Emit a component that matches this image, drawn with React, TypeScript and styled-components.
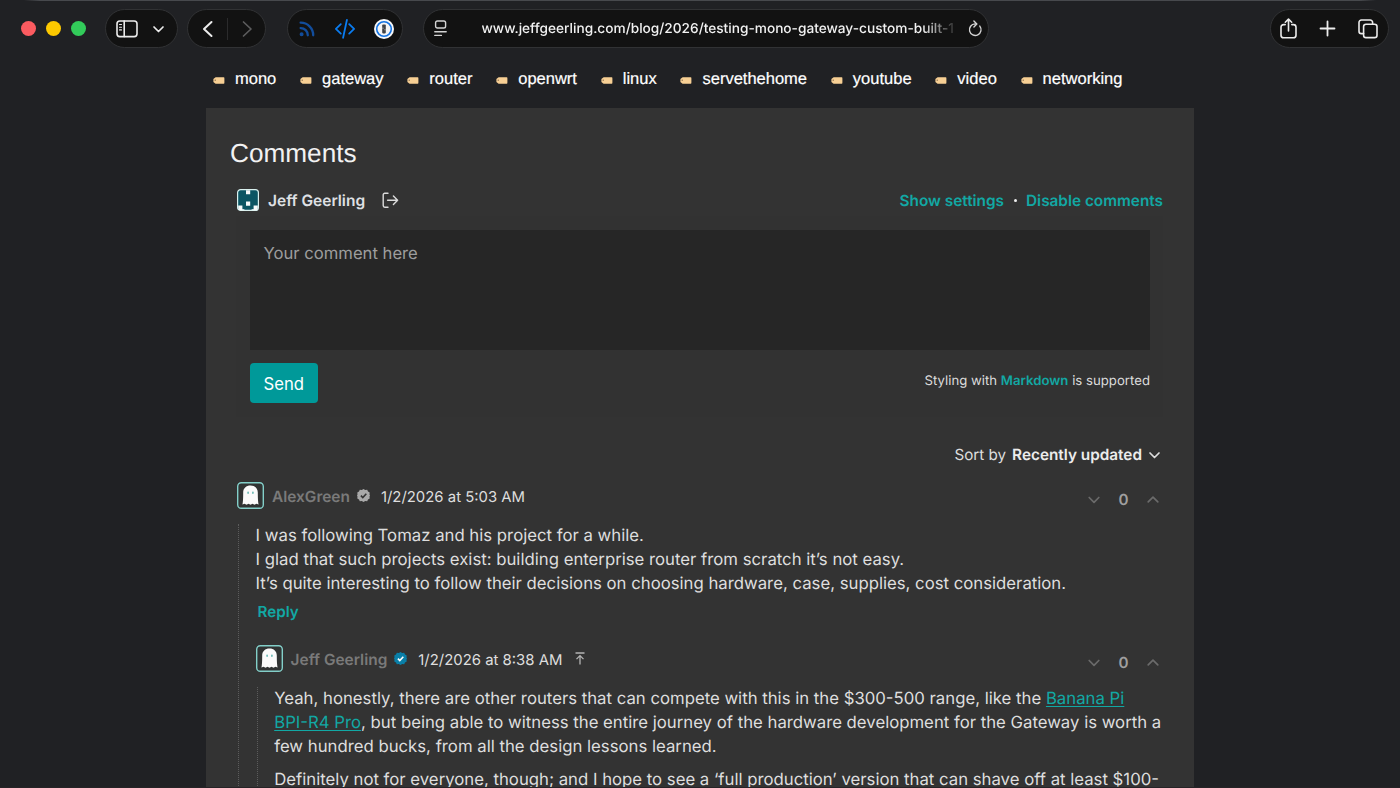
import React from 'react';
import styled, { createGlobalStyle } from 'styled-components';

const sans = `Inter, "Liberation Sans", sans-serif`;
const helv = `"Liberation Sans", Arial, sans-serif`;
const teal = '#12a8a4';

const GlobalStyle = createGlobalStyle`
  *, *::before, *::after { box-sizing: border-box; }
  body {
    margin: 0;
    background: #202124;
    color: #dedede;
    font-family: ${sans};
    text-rendering: geometricPrecision;
    -webkit-font-smoothing: antialiased;
  }
  svg { display: block; flex: none; overflow: visible; }
`;

const Window = styled.div`
  width: 1400px;
  height: 788px;
  overflow: hidden;
  border-bottom: 1px solid #262326;
  background: #202124;
`;

/* Browser toolbar */

const Toolbar = styled.header`
  position: relative;
  display: flex;
  align-items: center;
  height: 56px;
  padding: 1px 11px 0 21px;

  &::before {
    content: '';
    position: absolute;
    top: 0;
    left: 24px;
    right: 24px;
    height: 1px;
    background: linear-gradient(90deg, transparent, #47494d 16px, #47494d calc(100% - 16px), transparent);
  }
`;

const Lights = styled.div`
  display: flex;
  gap: 10px;
  margin-right: 19px;
`;

const Light = styled.span<{ $color: string }>`
  width: 15px;
  height: 15px;
  border-radius: 50%;
  background: ${(p) => p.$color};
`;

const Pill = styled.div<{ $width: number; $after?: number; $color?: string; $pad: string }>`
  display: flex;
  align-items: center;
  justify-content: space-between;
  width: ${(p) => p.$width}px;
  height: 39px;
  margin-right: ${(p) => p.$after ?? 0}px;
  padding: ${(p) => p.$pad};
  border: 1px solid #313234;
  border-radius: 20px;
  background: #121212;
  color: ${(p) => p.$color ?? '#ececec'};
`;

const PillDivider = styled.span`
  width: 1px;
  height: 22px;
  background: #2b2b2c;
`;

const Url = styled.span`
  flex: 1;
  margin: 1px 8px 0 35px;
  white-space: nowrap;
  font-size: 13.68px;
  font-weight: 500;
  line-height: 20px;
  color: #f2f2f2;
  mask-image: linear-gradient(90deg, #000 440px, transparent 477px);
`;

const Spacer = styled.div`
  flex: 1;
`;

/* Page */

const TagList = styled.nav`
  display: flex;
  align-items: center;
  gap: 23.8px;
  height: 45px;
  margin: 0 0 7px 213px;
`;

const Tag = styled.a`
  display: flex;
  align-items: center;
  gap: 10px;
  font: 16.5px/20px ${helv};
  color: #fff;
  -webkit-text-stroke: 0.2px #fff;

  svg { margin-top: 4px; }
`;

const Card = styled.main`
  width: 988px;
  height: 700px;
  margin: 0 auto;
  padding: 29px 31px 0;
  background: #333;
`;

const Title = styled.h2`
  margin: 0 0 18px -7px;
  font: 400 26.2px/32px ${helv};
  color: #f2f2f2;
`;

const AccountBar = styled.div`
  display: flex;
  align-items: center;
  height: 26px;
  font-size: 15.35px;
  font-weight: 600;
`;

const AccountName = styled.span`
  margin: 1px 17px 0 9px;
  font-size: 15.5px;
  color: #dfe0e4;
`;

const AccountLinks = styled.span`
  display: flex;
  align-items: center;
  margin: 1px 0 0 auto;
  color: #fff;
`;

const TealLink = styled.a`
  font-weight: 600;
  color: ${teal};
`;

const Dot = styled.i`
  width: 3px;
  height: 3px;
  margin: 0 9.5px;
  border-radius: 50%;
  background: #f0f0f0;
`;

const Form = styled.form`
  width: 927px;
  margin: 3px 0 0 -1px;
  padding: 14px 13px 14px 14px;
  background: #323232;
`;

const CommentInput = styled.div`
  height: 120px;
  padding: 12px 13.5px;
  background: #262626;
  font-size: 16.65px;
  line-height: 24px;
  color: #9d9d9d;
`;

const FormActions = styled.div`
  display: flex;
  justify-content: space-between;
  margin-top: 13px;
`;

const SendButton = styled.button`
  width: 67.5px;
  height: 40px;
  padding: 1px 0 0;
  border: 0;
  border-radius: 4px;
  background: #009999;
  color: #fff;
  font: 400 16.7px/24px ${sans};
`;

const MarkdownHint = styled.span`
  height: 36px;
  font-size: 13.17px;
  line-height: 36px;
  letter-spacing: 0.02px;
  color: #dcdcdc;
`;

const SortBar = styled.div`
  display: flex;
  align-items: center;
  justify-content: flex-end;
  height: 24px;
  margin: 26px 3px 15px 0;
  font-size: 15.2px;
  line-height: 24px;

  b {
    margin: 0 7px 0 6px;
    font-size: 15.34px;
    font-weight: 600;
    color: #ececec;
  }
`;

const CommentHeader = styled.div`
  display: flex;
  align-items: center;
  height: 27px;
  font-size: 14.9px;
  line-height: 20px;
`;

const Author = styled.span`
  margin: 2px 7px 0 8px;
  font-size: 15.45px;
  font-weight: 600;
  color: #7a7a7a;
`;

const Timestamp = styled.time`
  margin: 2px 13px 0 11px;
`;

const Votes = styled.div`
  display: flex;
  align-items: center;
  gap: 18.5px;
  margin: 9px 4px 0 auto;
  font-size: 15.2px;
  font-weight: 600;
  color: #a0a0a0;
`;

const Thread = styled.div<{ $inset: number }>`
  margin: 15px 0 0 ${(p) => p.$inset}px;
  padding-left: 16.6px;
  border-left: 1px dotted #5c5c5c;
  font-size: 16.74px;
  line-height: 24px;
`;

const Paragraph = styled.p`
  margin: 0 0 9px;
  white-space: nowrap;

  a {
    color: ${teal};
    text-decoration: underline;
    text-decoration-thickness: 1px;
    text-underline-offset: 2px;
  }
`;

const ReplyLink = styled(TealLink)`
  display: block;
  margin: -5px 0 21px 2px;
  font-size: 15.2px;
  line-height: 24px;
`;

/* Icons */

const line = {
  fill: 'none',
  stroke: 'currentColor',
  strokeLinecap: 'round' as const,
  strokeLinejoin: 'round' as const,
};

const Chevron = ({ d, w, h, color, sw = 1.7 }: { d: string; w: number; h: number; color?: string; sw?: number }) => (
  <svg width={w} height={h} {...line} stroke={color ?? 'currentColor'} strokeWidth={sw}>
    <path d={d} />
  </svg>
);

const SidebarIcon = () => (
  <svg width="22" height="18" {...line} strokeWidth="1.6">
    <rect x="1" y="1" width="20" height="15.6" rx="2.8" />
    <path d="M8.2 1v15.6" />
    <path d="M3.5 4.5h2M3.5 7.2h2M3.5 9.9h2" strokeWidth="1.1" />
  </svg>
);

const RssIcon = () => (
  <svg width="16" height="16" fill="none" stroke="#124d9c" strokeWidth="2.3" strokeLinecap="round">
    <circle cx="2.6" cy="13.2" r="1.2" fill="#124d9c" stroke="#124d9c" strokeWidth="1.6" />
    <path d="M1.6 7.1a7.1 7.1 0 0 1 7.2 7.2" />
    <path d="M1.6 1.7a12.5 12.5 0 0 1 12.6 12.6" />
  </svg>
);

const CodeIcon = () => (
  <svg width="20" height="20" {...line} stroke="#0a7cf0" strokeWidth="1.8">
    <path d="M5.8 5.2.9 9.9l4.9 4.7M14.2 5.2l4.9 4.7-4.9 4.7M11.9 1 8.1 18.8" />
  </svg>
);

const OnePasswordIcon = () => (
  <svg width="20" height="20">
    <circle cx="10" cy="10" r="10" fill="#f7f7f7" />
    <circle cx="10" cy="10" r="7.3" fill="#f4f4f4" stroke="#1474e4" strokeWidth="1.6" />
    <rect x="8.2" y="5.6" width="3.6" height="8.8" rx="0.8" fill="#3f4246" />
    <path d="M8.4 9.2h1.2M10.4 10.8h1.2" stroke="#c9c9c9" strokeWidth="0.8" />
  </svg>
);

const ReaderIcon = () => (
  <svg width="13" height="17" {...line} strokeWidth="1.4">
    <rect x="1.6" y="1" width="10" height="7" rx="1.8" />
    <path d="M.8 11.8h11.4M.8 15.4h6.6" />
  </svg>
);

const ReloadIcon = () => (
  <svg width="14" height="17" {...line} strokeWidth="1.4">
    <path d="M11.8 6.1A5.8 5.8 0 1 1 7 3.9l1.5.1" />
    <path d="M5.9 1.1 8.8 4 5.9 6.9" />
  </svg>
);

const ShareIcon = () => (
  <svg width="17" height="21" {...line} strokeWidth="1.6">
    <path d="M5.2 6.6H3.6A2.6 2.6 0 0 0 1 9.2v8a2.6 2.6 0 0 0 2.6 2.6h9.8a2.6 2.6 0 0 0 2.6-2.6v-8a2.6 2.6 0 0 0-2.6-2.6h-1.6" />
    <path d="M8.5 13V1.2M5.3 4.2l3.2-3.1 3.2 3.1" />
  </svg>
);

const PlusIcon = () => (
  <svg width="15" height="15" {...line} strokeWidth="1.8">
    <path d="M7.5.5v14M.5 7.5h14" />
  </svg>
);

const TabsIcon = () => (
  <svg width="20" height="20" {...line} strokeWidth="1.6">
    <rect x="5.6" y="5.2" width="13.4" height="13.4" rx="2.4" />
    <path d="M5.6 14.6H3.4A2.4 2.4 0 0 1 1 12.2V3.4A2.4 2.4 0 0 1 3.4 1h8.8a2.4 2.4 0 0 1 2.4 2.4v1.8" />
  </svg>
);

const TagIcon = () => (
  <svg width="12" height="7">
    <path d="M2.6.2h8.1q.7 0 .7.7v5.2q0 .7-.7.7H2.6L.4 4.9V2.1z" fill="#f7cf94" />
    <circle cx="2.2" cy="3.2" r="0.6" fill="#6b5136" />
  </svg>
);

const UserAvatar = () => (
  <svg width="22" height="22">
    <rect x="0.6" y="0.6" width="20.8" height="20.8" rx="3" fill="#0b5563" stroke="#d9f0ee" strokeWidth="1.2" />
    <path d="M9 1.2h4.2v4H9zM9 12.6h4.2v4.2H9zM1.2 16.4h4.200v3.800h2v1h-4.200q-2 0-2-2zM20.800 16.400h-4.200v3.800h-2v1h4.200q2 0 2-2z" fill="#f6fafa" />
  </svg>
);

const LogoutIcon = () => (
  <svg width="17" height="17" {...line} stroke="#dcdcdc" strokeWidth="1.4">
    <path d="M6 1.2H2.8A1.6 1.6 0 0 0 1.2 2.8v10.8a1.6 1.6 0 0 0 1.6 1.6H6M5.6 8.2h10M11.4 4l4.2 4.2-4.2 4.2" />
  </svg>
);

const GhostAvatar = () => (
  <svg width="27" height="27">
    <rect x="0.7" y="0.7" width="25.6" height="25.6" rx="3.6" fill="#303333" stroke="#83cfc9" strokeWidth="1.4" />
    <path
      d="M5.400 22.600Q6.200 20 6.200 10.600C6.200 6.300 9.200 3.600 13.500 3.600S20.800 6.300 20.800 10.600Q20.800 20 21.600 22.600l-2.200-.8-1.900.9-2-.9-2 .9-2-.9-2 .9-1.900-.9z"
      fill="#fbfbfb"
    />
    <ellipse cx="11.1" cy="10.800" rx="0.800" ry="1.300" fill="#5fb5b0" />
    <ellipse cx="15.900" cy="10.800" rx="0.800" ry="1.300" fill="#5fb5b0" />
  </svg>
);

const VerifiedBadge = ({ color, tick }: { color: string; tick: string }) => (
  <svg width="13" height="13">
    <path
      d="M6.5 0l1.7 1 2-.2.8 1.800 1.700 1-.2 1.900.5 1-.5 1 .2 2-1.700 1-.8 1.700-2-.2-1.700 1-1.700-1-2 .2-.8-1.700-1.700-1 .2-2L0 6.500l.5-1L.3 3.600l1.700-1L2.800.8l2 .2z"
      fill={color}
    />
    <path d="M3.900 6.600l1.900 1.900 3.500-3.700" fill="none" stroke={tick} strokeWidth="1.600" />
  </svg>
);

const ToParentIcon = () => (
  <svg width="10" height="13" fill="none" stroke="#b4b4b4" strokeWidth="1.300">
    <path d="M.5 1h9M5 12.500V3.600M1.500 7.100 5 3.600l3.500 3.500" />
  </svg>
);

const VoteCounter = ({ score }: { score: number }) => (
  <Votes>
    <Chevron d="M1.200 1.500 6 6.300l4.800-4.800" w={12} h={8} color="#6b6b6b" />
    {score}
    <Chevron d="M1.200 5.900 6 1.100l4.800 4.800" w={12} h={8} color="#6b6b6b" />
  </Votes>
);

const tags = ['mono', 'gateway', 'router', 'openwrt', 'linux', 'servethehome', 'youtube', 'video', 'networking'];

export default function App() {
  return (
    <Window>
      <GlobalStyle />
      <Toolbar>
        <Lights>
          <Light $color="#fb5b60" />
          <Light $color="#fdc900" />
          <Light $color="#32cb5a" />
        </Lights>
        <Pill $width={73} $after={9} $pad="0 13px 0 9.500px">
          <SidebarIcon />
          <Chevron d="M1 1l4.500 4.500L10 1" w={11} h={6} />
        </Pill>
        <Pill $width={79} $after={21} $pad="0 13px 0 15px">
          <Chevron d="M8.500 1 1 8l7.500 7" w={10} h={16} sw={2} />
          <PillDivider />
          <Chevron d="M1.500 1 9 8l-7.500 7" w={10} h={16} color="#5c5c5d" />
        </Pill>
        <Pill $width={116} $after={20} $pad="0 8px 0 11px">
          <RssIcon />
          <CodeIcon />
          <OnePasswordIcon />
        </Pill>
        <Pill $width={566} $pad="0 6px 0 9.500px" $color="#d4d4d4">
          <ReaderIcon />
          <Url>www.jeffgeerling.com/blog/2026/testing-mono-gateway-custom-built-1</Url>
          <ReloadIcon />
        </Pill>
        <Spacer />
        <Pill $width={119} $pad="0 10px 0 9px">
          <ShareIcon />
          <PlusIcon />
          <TabsIcon />
        </Pill>
      </Toolbar>

      <TagList>
        {tags.map((tag) => (
          <Tag key={tag}>
            <TagIcon />
            {tag}
          </Tag>
        ))}
      </TagList>

      <Card>
        <Title>Comments</Title>
        <AccountBar>
          <UserAvatar />
          <AccountName>Jeff Geerling</AccountName>
          <LogoutIcon />
          <AccountLinks>
            <TealLink>Show settings</TealLink>
            <Dot />
            <TealLink>Disable comments</TealLink>
          </AccountLinks>
        </AccountBar>

        <Form>
          <CommentInput>Your comment here</CommentInput>
          <FormActions>
            <SendButton type="button">Send</SendButton>
            <MarkdownHint>
              Styling with <TealLink>Markdown</TealLink> is supported
            </MarkdownHint>
          </FormActions>
        </Form>

        <SortBar>
          Sort by <b>Recently updated</b>
          <Chevron d="M1 1l4.500 4.500L10 1" w={11} h={6} />
        </SortBar>

        <article>
          <CommentHeader>
            <GhostAvatar />
            <Author>AlexGreen</Author>
            <VerifiedBadge color="#a9a9a9" tick="#333" />
            <Timestamp>1/2/2026 at 5:03 AM</Timestamp>
            <VoteCounter score={0} />
          </CommentHeader>
          <Thread $inset={1}>
            <Paragraph>
              I was following Tomaz and his project for a while.
              <br />
              I glad that such projects exist: building enterprise router from scratch it’s not easy.
              <br />
              It’s quite interesting to follow their decisions on choosing hardware, case, supplies, cost consideration.
            </Paragraph>
            <ReplyLink>Reply</ReplyLink>
            <article>
              <CommentHeader>
                <GhostAvatar />
                <Author>Jeff Geerling</Author>
                <VerifiedBadge color="#0a7fa8" tick="#fff" />
                <Timestamp>1/2/2026 at 8:38 AM</Timestamp>
                <ToParentIcon />
                <VoteCounter score={0} />
              </CommentHeader>
              <Thread $inset={1}>
                <Paragraph>
                  Yeah, honestly, there are other routers that can compete with this in the $300-500 range, like the{' '}
                  <a>
                    Banana Pi
                    <br />
                    BPI-R4 Pro
                  </a>
                  , but being able to witness the entire journey of the hardware development for the Gateway is worth a
                  <br />
                  few hundred bucks, from all the design lessons learned.
                </Paragraph>
                <Paragraph>
                  Definitely not for everyone, though; and I hope to see a ‘full production’ version that can shave off
                  at least $100-
                </Paragraph>
              </Thread>
            </article>
          </Thread>
        </article>
      </Card>
    </Window>
  );
}
